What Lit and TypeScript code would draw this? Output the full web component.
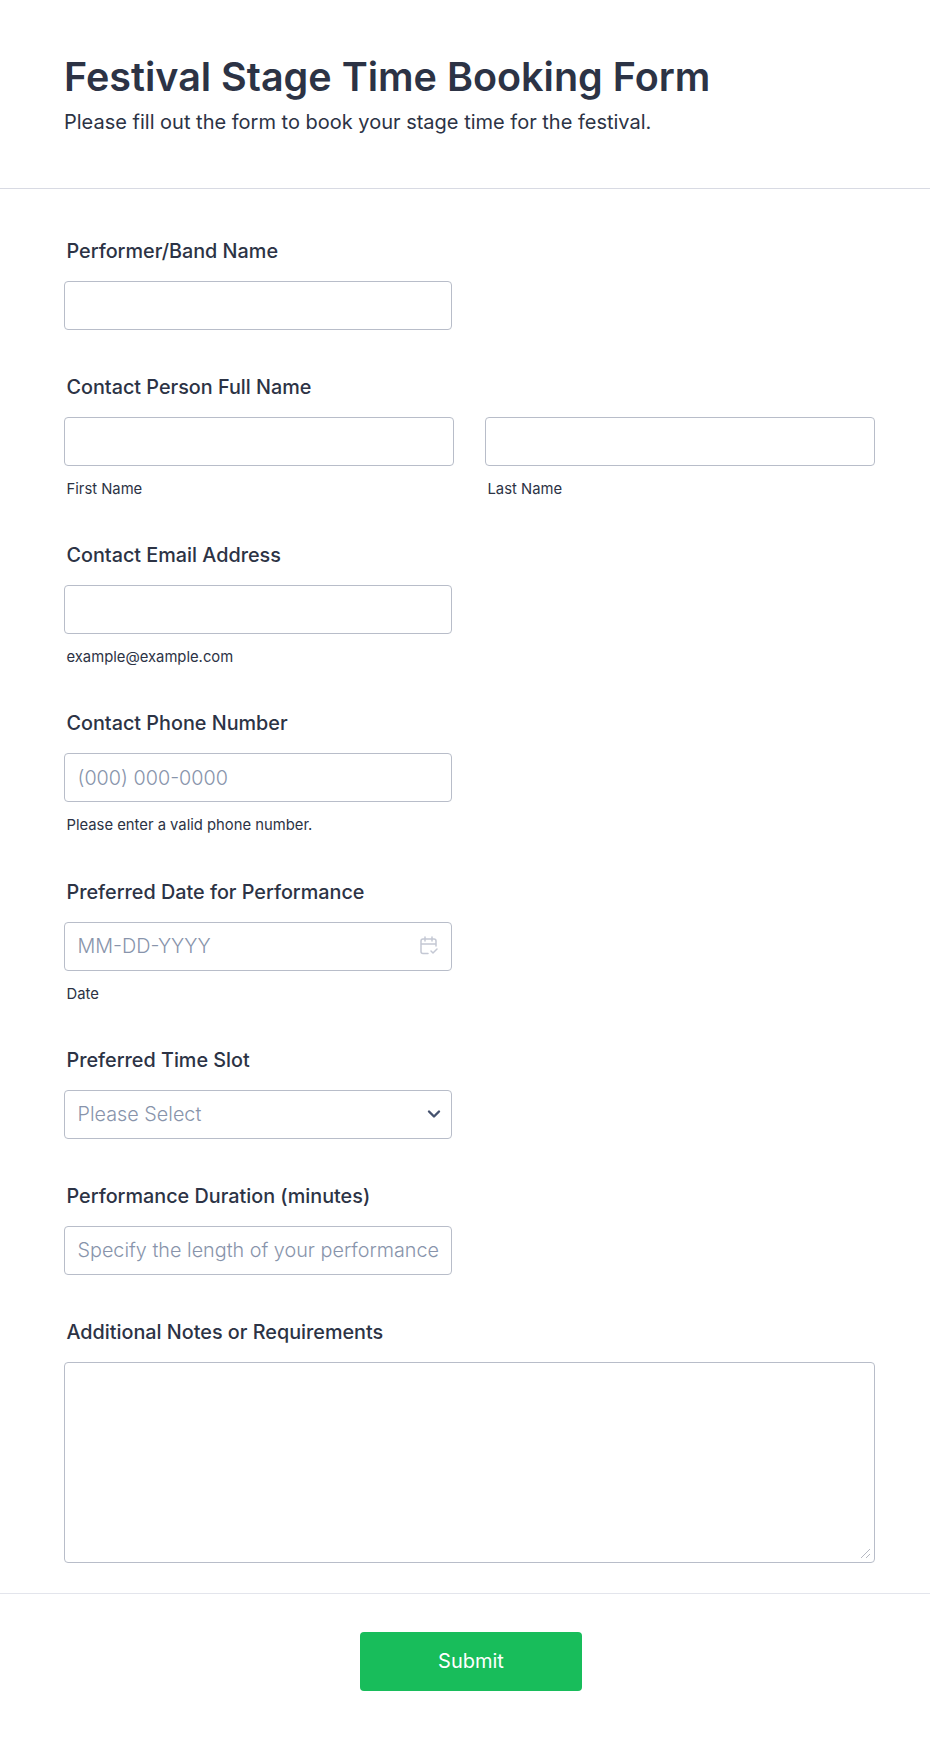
import { LitElement, html, css } from "lit";
import { customElement } from "lit/decorators.js";

@customElement("app-root")
export class AppRoot extends LitElement {
  static styles = css`
    :host { display: block; width: 930px; height: 1740px; background: #fff; font-family: Inter, sans-serif; color: #2c3345; box-sizing: border-box; }
    * { box-sizing: border-box; }
    .header { height: 189px; padding: 52px 64px 0; border-bottom: 1px solid #d8dae3; }
    h1 { margin: 0; font-size: 39.500px; line-height: 50px; font-weight: 600; }
    .sub { font-size: 20px; line-height: 24px; margin-top: 8px; }
    .form { padding: 5px 64px 0; }
    .field { padding-top: 45px; }
    .label { padding-left: 2.500px; font-size: 19.800px; font-weight: 500; line-height: 24px; margin-bottom: 18px; }
    .box { height: 49px; border: 1px solid #b8bdc9; border-radius: 4px; background: #fff; padding: 0 12.500px; font-size: 19.800px; font-weight: 300; color: #8894ab; display: flex; align-items: center; justify-content: space-between; white-space: nowrap; overflow: hidden; width: 388px; }
    .select { padding-right: 10px; }
    .row { display: flex; gap: 31px; }
    .row .box { width: 390px; }
    .hint { font-size: 14.800px; line-height: 17.200px; margin: 15px 0 0 2.500px; color: #2c3345; }
    .area { height: 201px; width: 811px; position: relative; }
    .grip { position: absolute; right: 3px; bottom: 3px; }
    .footer { margin-top: 30px; border-top: 1px solid #e3e5ec; padding: 38px 0 0 12px; display: flex; justify-content: center; }
    .submit { width: 222px; height: 59px; border: 0; border-radius: 4px; background: #18bd5b; color: #fff; font: 400 20px Inter, sans-serif; }
  `;
  render() {
    return html`
      <div class="header">
        <h1>Festival Stage Time Booking Form</h1>
        <div class="sub">Please fill out the form to book your stage time for the festival.</div>
      </div>
      <div class="form">
        <div class="field"><div class="label">Performer/Band Name</div><div class="box"></div></div>
        <div class="field"><div class="label">Contact Person Full Name</div>
          <div class="row">
            <div><div class="box"></div><div class="hint">First Name</div></div>
            <div><div class="box"></div><div class="hint">Last Name</div></div>
          </div>
        </div>
        <div class="field"><div class="label">Contact Email Address</div><div class="box"></div><div class="hint">example@example.com</div></div>
        <div class="field"><div class="label">Contact Phone Number</div><div class="box">(000) 000-0000</div><div class="hint">Please enter a valid phone number.</div></div>
        <div class="field"><div class="label">Preferred Date for Performance</div>
          <div class="box">MM-DD-YYYY
            <svg width="20" height="20" viewBox="0 0 20 20" fill="none" stroke="#c4c8d4" stroke-width="1.5" stroke-linecap="round" stroke-linejoin="round"><path d="M9 17.500H4a2 2 0 0 1-2-2V5a2 2 0 0 1 2-2h11a2 2 0 0 1 2 2v5M2 8h15M6 1v4M13 1v4M12 15l2 2 4-4"/></svg>
          </div>
          <div class="hint">Date</div></div>
        <div class="field"><div class="label">Preferred Time Slot</div>
          <div class="box select">Please Select
            <svg width="14" height="10" viewBox="0 0 14 10" fill="none" stroke="#45526e" stroke-width="2.400" stroke-linecap="round" stroke-linejoin="round"><path d="M2 2.500l5 5 5-5"/></svg>
          </div></div>
        <div class="field"><div class="label">Performance Duration (minutes)</div><div class="box">Specify the length of your performance</div></div>
        <div class="field"><div class="label">Additional Notes or Requirements</div>
          <div class="box area"><svg class="grip" width="12" height="12" viewBox="0 0 12 12" stroke="#b5b8c2" fill="none"><path d="M11 2L2 11M11 7L7 11"/></svg></div></div>
      </div>
      <div class="footer"><button class="submit">Submit</button></div>
    `;
  }
}
